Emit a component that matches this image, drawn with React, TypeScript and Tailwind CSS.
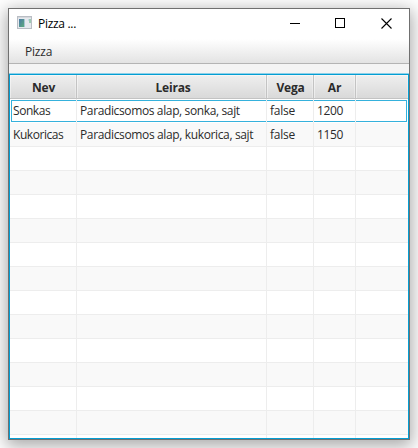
const columns = [
  { title: 'Nev', cell: 'w-[67px] pl-[3px]', head: 'w-[67px] pl-[1px]' },
  { title: 'Leiras', cell: 'w-[190px] pl-[3px]', head: 'w-[190px] pl-[3px]' },
  { title: 'Vega', cell: 'w-[47px] pl-[3px]', head: 'w-[47px] pl-[1px]' },
  { title: 'Ar', cell: 'w-[42px] pl-[3px]', head: 'w-[42px]' },
];

const pizzas = [
  ['Sonkas', 'Paradicsomos alap, sonka, sajt', 'false', '1200'],
  ['Kukoricas', 'Paradicsomos alap, kukorica, sajt', 'false', '1150'],
];

const textWidths = [
  ['tracking-[-0.45px]', 'tracking-[-0.37px]', 'tracking-[-0.25px]', 'tracking-[-0.4px]'],
  ['tracking-[-0.45px]', 'tracking-[-0.36px]', 'tracking-[-0.25px]', 'tracking-[-0.4px]'],
];

function AppIcon() {
  return (
    <svg className="-mt-[3px]" width="16" height="14" viewBox="0 0 16 14" shapeRendering="crispEdges">
      <defs>
        <linearGradient id="pane" x1="0" y1="0" x2="1" y2="1">
          <stop offset="0" stopColor="#4a78a8" />
          <stop offset="1" stopColor="#5cab7c" />
        </linearGradient>
      </defs>
      <rect width="15" height="13" fill="#b9bdc4" />
      <rect x="1" y="1" width="13" height="1" fill="#d5d8dc" />
      <rect x="1" y="2" width="13" height="10" fill="#e6e9ee" />
      <rect x="2" y="3" width="5" height="8" fill="url(#pane)" />
      <rect x="7" y="3" width="1" height="8" fill="#a9c4d2" />
      <rect x="12" y="3" width="2" height="4" fill="#9ccbb4" />
      <rect x="11" y="3" width="1" height="2" fill="#c6d9e8" />
    </svg>
  );
}

function TitleBar() {
  return (
    <div className="flex h-[30px] items-center bg-white pl-2 text-black">
      <AppIcon />
      <span className="ml-[5px] flex-1 text-[12px] tracking-[-0.3px]">Pizza ...</span>
      <div className="flex items-center gap-[35px] pr-[17px] pb-px">
        <svg width="10" height="11" shapeRendering="crispEdges"><path d="M0 5.5H10" stroke="#000" /></svg>
        <svg width="11" height="11" shapeRendering="crispEdges"><path d="M.5 .5H9.5V9.5H.5Z" fill="none" stroke="#000" /></svg>
        <svg width="11" height="11"><path d="M.5 .5L10.5 10.5M10.5 .5L.5 10.5" stroke="#000" strokeWidth="1.1" /></svg>
      </div>
    </div>
  );
}

export default function App() {
  return (
    <div className="h-[448px] w-[418px] overflow-hidden bg-white p-2 font-['Open_Sans','Noto_Sans',sans-serif] text-[12px] leading-4 text-[#2b2b2b]">
      <div className="flex h-[432px] w-[402px] flex-col border border-[#707070] bg-[#f4f4f4] shadow-[0_4px_16px_2px_rgba(0,0,0,0.34)]">
        <TitleBar />
        <div className="flex h-[25px] items-center border-b border-[#b4b4b4] bg-linear-to-b from-white to-[#e3e3e3] pt-px pl-4">
          <span className="tracking-[-0.2px]">Pizza</span>
        </div>
        <div className="h-[10px] shrink-0 border-b border-[#8fd0e8]" />
        <div className="flex flex-1 flex-col overflow-hidden border border-[#039ed3] bg-white">
          <div className="flex h-6 shrink-0 border-b border-[#c3c3c3] bg-linear-to-b from-[#efefef] to-[#d9d9d9] font-bold">
            {columns.map((c) => (
              <div key={c.title} className={`flex shrink-0 items-center justify-center border-r border-[#c3c3c3] pt-[3px] shadow-[inset_1px_1px_0_rgba(255,255,255,0.45),inset_-1px_0_0_rgba(255,255,255,0.3)] ${c.head}`}>
                <span className="tracking-[-0.2px]">{c.title}</span>
              </div>
            ))}
            <div className="flex-1 shadow-[inset_1px_1px_0_rgba(255,255,255,0.45),inset_-1px_0_0_rgba(255,255,255,0.3)]" />
          </div>
          {Array.from({ length: 15 }, (_, r) => (
            <div key={r} className={`relative flex h-6 shrink-0 ${r > 0 ? 'border-b border-[#ededed]' : ''} ${r % 2 ? 'bg-[#f9f9f9]' : 'bg-white'}`}>
              {r === 0 && <div className="absolute top-px right-px left-px h-[22px] border border-[#039ed3]/80" />}
              {columns.map((c, i) => (
                <div key={c.title} className={`relative flex shrink-0 items-center border-r border-[#ededed] whitespace-nowrap ${c.cell}`}>
                  {pizzas[r] && <span className={textWidths[r][i]}>{pizzas[r][i]}</span>}
                </div>
              ))}
            </div>
          ))}
        </div>
      </div>
    </div>
  );
}
